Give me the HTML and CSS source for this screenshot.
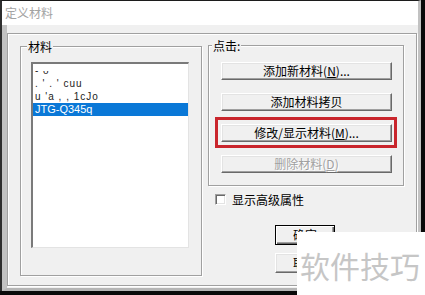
FILE: index.html
```html
<!DOCTYPE html>
<html>
<head>
<meta charset="utf-8">
<link rel="stylesheet" href="styles.css">
</head>
<body>
<div class="window">
  <div class="titlebar">定义材料</div>
  <div class="client">
    <div class="frame">
      <div class="group group-mat">
        <div class="group-label">材料</div>
        <div class="listbox">
          <div class="item garble">- ᴗ</div>
          <div class="item garble">. ' . ' cuu</div>
          <div class="item garble">u 'a , , 1cJo</div>
          <div class="item selected">JTG-Q345q</div>
        </div>
      </div>
      <div class="right-col">
        <div class="group group-act">
          <div class="group-label">点击:</div>
          <div class="btn first">添加新材料(<u>N</u>)...</div>
          <div class="btn">添加材料拷贝</div>
          <div class="btn highlight">修改/显示材料(<u>M</u>)...</div>
          <div class="btn disabled">删除材料(<u>D</u>)</div>
        </div>
        <div class="check"><span class="box"></span><span class="check-text">显示高级属性</span></div>
        <div class="btn small default">确定</div>
        <div class="btn small cancel">取消</div>
      </div>
    </div>
  </div>
</div>
<div class="watermark">软件技巧</div>
</body>
</html>
```
FILE: styles.css
```css
* { box-sizing: border-box; }
html, body { margin: 0; padding: 0; }
body {
  width: 425px;
  height: 295px;
  background: #0a0a0a;
  overflow: hidden;
  position: relative;
  font-family: "Noto Sans CJK SC", "Liberation Sans", sans-serif;
  font-size: 12px;
  color: #000;
}
.window {
  width: 421px;
  height: 291px;
  display: flex;
  flex-direction: column;
  border-top: 1px solid #1c1c1c;
  border-left: 2px solid #2e2e2e;
  border-right: 3px solid #c2c2c2;
}
.titlebar {
  flex: none;
  height: 24px;
  background: #fff;
  color: #a3a3a3;
  font-size: 12px;
  line-height: 24px;
  padding-left: 3px;
}
.client {
  flex: 1;
  display: flex;
  background: #f0f0f0;
  border-left: 5px solid #c2c2c2;
  border-bottom: 3px solid #b5b5b5;
  padding: 8px 1px 2px 0;
}
.frame {
  flex: 1;
  display: flex;
  gap: 6px;
  align-items: flex-start;
  padding: 11px 12px 0 12px;
  border: 1px solid #a0a0a0;
  box-shadow: inset 1px 1px 0 #fff, 1px 1px 0 #fff;
}
.group {
  display: flex;
  flex-direction: column;
  align-items: flex-start;
  border: 1px solid #a0a0a0;
  box-shadow: inset 1px 1px 0 #fff, 1px 1px 0 #fff;
}
.group-label {
  margin: -8px 0 0 6px;
  height: 15px;
  line-height: 15px;
  padding: 0 1px;
  background: #f0f0f0;
}
.group-mat {
  width: 182px;
  height: 230px;
  margin-top: 1px;
}
.listbox {
  margin: 8px 0 0 10px;
  width: 158px;
  height: 186px;
  background: #fff;
  border-top: 2px solid #7a7a7a;
  border-left: 2px solid #7a7a7a;
  border-right: 1px solid #e3e3e3;
  border-bottom: 1px solid #e3e3e3;
}
.item {
  height: 13px;
  line-height: 13px;
  font-family: "Liberation Sans", sans-serif;
  font-size: 11px;
  padding-left: 2px;
  white-space: nowrap;
}
.garble { letter-spacing: 1px; font-size: 10px; color: #222; }
.selected {
  background: #0a78d7;
  color: #fff;
}
.right-col {
  width: 196px;
  display: flex;
  flex-direction: column;
  align-items: flex-start;
}
.group-act {
  width: 196px;
  height: 141px;
}
.group-act .group-label { margin-left: 3px; }
.btn {
  width: 171px;
  height: 18px;
  margin: 13px 0 0 12px;
  background: #f0f0f0;
  border: 1px solid;
  border-color: #fff #696969 #696969 #fff;
  box-shadow: inset -1px -1px 0 #a0a0a0, inset 1px 1px 0 #e3e3e3;
  text-align: center;
  line-height: 16px;
  font-size: 12px;
  white-space: nowrap;
}
.btn.first { margin-top: 9px; }
.btn u { text-decoration: underline; text-underline-offset: 1px; }
.highlight { position: relative; }
.highlight::after {
  content: "";
  position: absolute;
  left: -7px;
  top: -8px;
  right: -6px;
  bottom: -7px;
  border: 3px solid #c9252c;
}
.disabled {
  color: #a0a0a0;
  text-shadow: 1px 1px 0 #fff;
}
.check {
  display: flex;
  align-items: center;
  gap: 6px;
  height: 11px;
  margin: 8px 0 0 7px;
}
.box {
  width: 11px;
  height: 11px;
  background: #fff;
  border: 1px solid;
  border-color: #a0a0a0 #fff #fff #a0a0a0;
  box-shadow: inset 1px 1px 0 #696969, inset -1px -1px 0 #e3e3e3;
}
.check-text {
  line-height: 11px;
  font-size: 12px;
}
.btn.small {
  width: 60px;
  height: 20px;
  line-height: 18px;
  margin: 8px 0 0 67px;
}
.btn.default {
  margin-top: 20px;
  border-color: #000;
  box-shadow: inset 1px 1px 0 #fff, inset -1px -1px 0 #696969, inset -2px -2px 0 #a0a0a0;
}
.watermark {
  position: absolute;
  left: 297px;
  top: 232px;
  right: 0;
  bottom: 0;
  background: #fff;
  color: #c6c6c6;
  font-size: 30px;
  line-height: 30px;
  padding: 18px 0 0 3px;
  white-space: nowrap;
}
```
